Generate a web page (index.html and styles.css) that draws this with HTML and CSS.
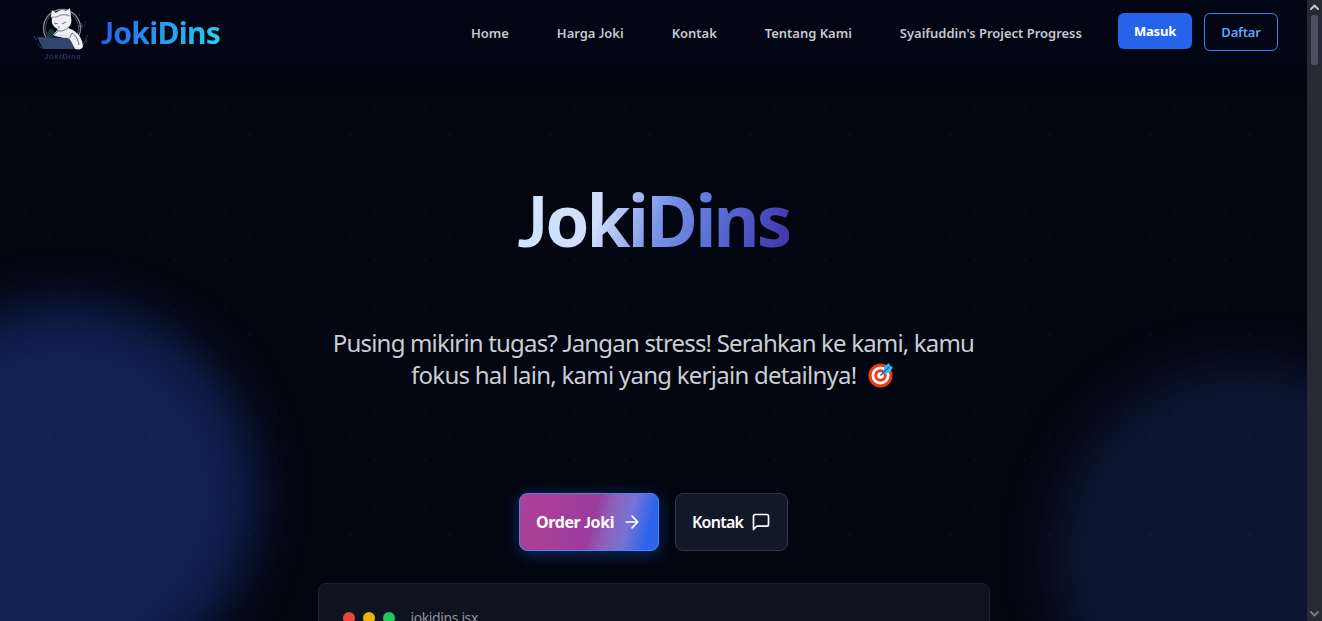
FILE: index.html
```html
<!DOCTYPE html>
<html lang="id">
<head>
<meta charset="utf-8">
<title>JokiDins</title>
<link rel="stylesheet" href="styles.css">
</head>
<body>
<div class="page">
  <div class="blob blob-left"></div>
  <div class="blob blob-right"></div>
  <div class="dots"></div>
  <header class="header">
    <a class="brand">
      <svg class="logo" viewBox="0 0 64 62">
        <circle cx="32" cy="26" r="18.5" fill="#02040f" stroke="#858b96" stroke-width="1.3"/>
        <circle cx="32" cy="26" r="16.5" fill="none" stroke="#434a58" stroke-width="1"/>
        <path d="M17 31l4-5 3 3 1 5-7 2z" fill="#16383f"/>
        <path d="M21 14l1-6 4 3c3-3 7-4 10-2l4-3 1 9c1 5 0 8-3 11 9 3 14 9 15 18 0 3-4 4-8 3l-6-10-9-2-7-2 5-6c-5-2-7-6-6-10z" fill="#eef0f6"/>
        <path d="M22 15c3 1 7-1 9-2 3-1 6 0 9 1" fill="none" stroke="#8992a8" stroke-width="1.2"/>
        <path d="M24 21l4 1M32 22l4-2M28 25l2 0M27 28c5 3 9-1 12-3M39 37l3-6c4 2 6 7 7 12M24 33l4-4" fill="none" stroke="#596179" stroke-width=".9"/>
        <path d="M24 34l6-3 6 2 4 4-4 0-5-2z" fill="#e5e8f0"/>
        <path d="M7 35l31 1c3 2 5 6 6 11H13z" fill="#33446f"/>
        <path d="M48 24h7M51 21v7M58 33l-5 10M4 34l3 5M8 42l4 5M49 13h1M55 20h1M56 39h1" fill="none" stroke="#78808c" stroke-width=".7" stroke-dasharray="2 1"/>
        <text class="logo-text" x="14" y="56.500">JokiDins</text>
      </svg>
      <span class="brand-name"><span class="j">J</span>okiDins</span>
    </a>
    <nav class="nav">
      <a>Home</a><a>Harga <span class="j">J</span>oki</a><a>Kontak</a><a>Tentang Kami</a><a>Syaifuddin's Project Progress</a>
    </nav>
    <div class="auth">
      <a class="login">Masuk</a><a class="register">Daftar</a>
    </div>
  </header>
  <main class="hero">
    <h1><span class="j">J</span>okiDins</h1>
    <p class="lead"><span class="line">Pusing mikirin tugas? <span class="j">J</span>angan stress! Serahkan ke kami, kamu</span><span class="line second">fokus hal lain, kami yang kerjain detailnya! <svg class="target" viewBox="0 0 26 26"><circle cx="12.5" cy="13.5" r="12" fill="#f03a17"/><circle cx="12.5" cy="13.5" r="9" fill="#fff"/><circle cx="12.5" cy="13.5" r="6.2" fill="#f03a17"/><circle cx="12.5" cy="13.5" r="3.3" fill="#fff"/><path d="M15 9l2-5 4-3 1 3 3 1-3 5-5 2z" fill="#27c4fa"/><path d="M12.500 13.500L21 5" stroke="#1264bd" stroke-width="1.5"/></svg></span></p>
    <div class="actions">
      <a class="btn order"><span>Order <span class="j">J</span>oki</span><svg viewBox="0 0 24 24"><path d="M5 12h14M12 5l7 7-7 7"/></svg></a>
      <a class="btn contact"><span>Kontak</span><svg viewBox="0 0 24 24"><path d="M21 15a2 2 0 0 1-2 2H7l-4 4V5a2 2 0 0 1 2-2h14a2 2 0 0 1 2 2z"/></svg></a>
    </div>
    <section class="code">
      <i class="dot red"></i><i class="dot yellow"></i><i class="dot green"></i><span>jokidins.jsx</span>
    </section>
  </main>
</div>
<aside class="scrollbar">
  <svg viewBox="0 0 9 6"><path d="M1 5l3.500-3.500L8 5" stroke="#c4c5ca"/></svg>
  <div class="thumb"></div>
  <svg class="down" viewBox="0 0 9 6"><path d="M1 1l3.500 3.500L8 1" stroke="#777a80"/></svg>
</aside>
</body>
</html>
```
FILE: styles.css
```css
* { box-sizing: border-box; }
body { margin: 0; height: 621px; overflow: hidden; display: flex; background: #020610; color: #d1d5db; font-family: "Noto Sans", sans-serif; }
.page { position: relative; width: 1307px; height: 621px; overflow: hidden; }
.blob { position: absolute; border-radius: 50%; width: 384px; height: 384px; filter: blur(24px); }
.blob-left { left: -127px; top: 303px; background: #102050; }
.blob-right { left: 1053px; top: 363px; background: #0c1633; }
.dots { position: absolute; inset: 0; background: radial-gradient(circle, #94a3b80b 1px, transparent 1.5px) 0 -15px / 50px 50px, radial-gradient(circle, #6366f10c 1.5px, transparent 2px) 0 -15px / 100px 100px; }
.j { font-family: Lato, sans-serif; }
.header { position: relative; height: 66px; display: flex; background: #020514; box-shadow: 0 8px 18px #02051480; }
.brand { display: flex; margin-left: 30px; width: 441px; }
.logo { width: 64px; height: 62px; margin-top: 2px; filter: blur(.25px); }
.logo-text { font: italic bold 8px "Liberation Sans", sans-serif; fill: #26345b; letter-spacing: .5px; }
.brand-name { align-self: flex-start; margin: 11px 0 0 7px; font-size: 30px; line-height: 42px; font-weight: 700; letter-spacing: -.7px; color: transparent; background: linear-gradient(90deg, #2563eb, #22d3ee); background-clip: text; }
.nav { display: flex; gap: 48px; width: 647px; padding-top: 23px; font-size: 13px; line-height: 20px; font-weight: 600; letter-spacing: -.02px; white-space: nowrap; color: #c6c9d0; }
.auth { display: flex; align-items: flex-start; gap: 12px; padding-top: 13px; font-size: 13px; font-weight: 600; letter-spacing: -.2px; }
.login, .register { width: 74px; text-align: center; border-radius: 6px; }
.login { height: 36px; line-height: 36px; color: #fff; background: #2563eb; font-weight: 700; }
.register { height: 38px; line-height: 36px; color: #60a5fa; border: 1px solid #3b82f6; }
.hero { position: relative; display: flex; flex-direction: column; align-items: center; }
h1 { margin: 104px 0 0; line-height: 100px; font-size: 71px; font-weight: 700; letter-spacing: -2.9px; color: transparent; background: linear-gradient(110deg, #cfe5ff 8%, #cfdcfb 32%, #7895e8 52%, #596fd5 70%, #4338ac 95%); background-clip: text; }
.lead { margin: 57px 0 0; font-size: 24px; line-height: 32px; letter-spacing: -.82px; color: #cbced5; white-space: nowrap; }
.line { display: block; height: 32px; text-align: center; }
.second { letter-spacing: -.74px; }
.target { width: 26px; height: 26px; vertical-align: -4px; margin: 0 2px 0 6px; }
.actions { display: flex; gap: 16px; margin-top: 102px; }
.btn { height: 58px; border-radius: 8px; display: flex; align-items: center; padding-left: 16px; font-size: 16px; font-weight: 600; color: #fff; letter-spacing: -.75px; white-space: nowrap; }
.btn > span { flex: none; }
.btn svg, .scrollbar svg { fill: none; stroke: #fff; stroke-width: 2; stroke-linecap: round; stroke-linejoin: round; }
.btn svg { width: 20px; height: 20px; margin-left: 8px; }
.order { width: 140px; font-weight: 700; letter-spacing: -.4px; border: 1px solid #4686f5; background: linear-gradient(105deg, #af4095 0, #9b3c9e 52%, #8b63bd 64%, #7773d5 76%, #2e64eb 90%); box-shadow: 0 3px 16px #2563eb66; }
.contact { width: 113px; background: #111827; border: 1px solid #303746; }
.code { width: 672px; height: 180px; margin-top: 32px; border: 1px solid #1d2430; border-radius: 8px; background: #0d131f; display: flex; align-items: flex-start; gap: 8px; padding: 28px 24px; }
.dot { width: 12px; height: 12px; border-radius: 50%; }
.red { background: #ef4444; }
.yellow { background: #eab308; }
.green { background: #22c55e; }
.code span { margin: -4px 0 0 8px; font-size: 14px; line-height: 20px; letter-spacing: -.4px; color: #8b929f; }
.scrollbar { width: 15px; height: 621px; background: #262a34; display: flex; flex-direction: column; align-items: center; padding: 4px 0; }
.scrollbar svg { width: 9px; height: 6px; }
.thumb { width: 7px; height: 50px; margin-top: 5px; border-radius: 3px; background: #4b5066; }
.down { margin-top: auto; }
```
